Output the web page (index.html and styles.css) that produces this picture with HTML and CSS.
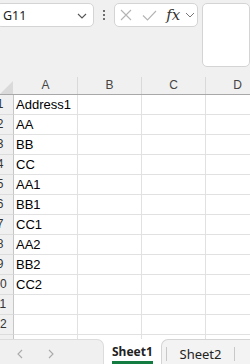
FILE: index.html
```html
<!DOCTYPE html>
<html lang="en">
<head>
    <meta charset="UTF-8">
    <meta name="viewport" content="width=device-width, initial-scale=1.0">
    <title>Book1 - Sheet1</title>
    <link rel="stylesheet" href="styles.css">
</head>
<body>
    <div class="ribbon">
        <div class="namebox">
            <span>G11</span>
            <svg class="chev" width="10" height="6" viewBox="0 0 10 6"><path d="M1 1l4 4 4-4" fill="none" stroke="#555" stroke-width="1.1"/></svg>
        </div>
        <div class="kebab"><i></i><i></i><i></i></div>
        <div class="fx-box">
            <svg class="btn-x" width="12" height="12" viewBox="0 0 12 12"><path d="M1 1l10 10M11 1L1 11" stroke="#b4b4b4" stroke-width="1.1"/></svg>
            <svg class="btn-ok" width="15" height="11" viewBox="0 0 15 11"><path d="M1 5.5l4.5 4.5L14 1" fill="none" stroke="#b4b4b4" stroke-width="1.1"/></svg>
            <span class="fx">fx</span>
            <svg class="chev" width="10" height="6" viewBox="0 0 10 6"><path d="M1 1l4 4 4-4" fill="none" stroke="#777" stroke-width="1"/></svg>
        </div>
        <div class="formula-input"></div>
    </div>

    <div class="sheet">
        <div class="col-heads">
            <div class="corner">
                <svg width="13" height="14" viewBox="0 0 13 14"><polygon points="0,14 13,14 13,1" fill="#dadada"/></svg>
            </div>
            <div class="col-head">A</div>
            <div class="col-head">B</div>
            <div class="col-head">C</div>
            <div class="col-head">D</div>
        </div>
        <div class="rows" id="rows"></div>
    </div>

    <div class="tabbar">
        <div class="tab-nav">
            <svg width="8" height="10" viewBox="0 0 8 10"><path d="M6 1L2 5l4 4" fill="none" stroke="#aaa" stroke-width="1.1"/></svg>
            <svg width="8" height="10" viewBox="0 0 8 10"><path d="M2 1l4 4-4 4" fill="none" stroke="#aaa" stroke-width="1.1"/></svg>
        </div>
        <div class="tab active"><span>Sheet1</span></div>
        <div class="tab-rest">
            <div class="tab"><span>Sheet2</span></div>
        </div>
    </div>

    <script>
        const values = ['Address1', 'AA', 'BB', 'CC', 'AA1', 'BB1', 'CC1', 'AA2', 'BB2', 'CC2', '', '', ''];
        const rows = document.getElementById('rows');

        values.forEach((value, i) => {
            const row = document.createElement('div');
            row.className = 'row';
            row.innerHTML = `<div class="row-head"><span>${i + 1}</span></div>` +
                `<div class="cell">${value}</div><div class="cell"></div><div class="cell"></div><div class="cell"></div>`;
            rows.appendChild(row);
        });
    </script>
</body>
</html>
```

FILE: styles.css
```css
* {
    margin: 0;
    padding: 0;
    box-sizing: border-box;
}

body {
    width: 250px;
    height: 364px;
    overflow: hidden;
    background: #ffffff;
    font-family: "Liberation Sans", Arial, sans-serif;
    color: #000;
}

.ribbon {
    height: 74px;
    background: #f0f0f0;
    display: flex;
    align-items: flex-start;
    padding-top: 3px;
}

.namebox {
    width: 101px;
    height: 24px;
    margin-left: -4px;
    background: #fff;
    border: 1px solid #d4d4d4;
    border-radius: 5px;
    display: flex;
    align-items: center;
    justify-content: space-between;
    padding: 0 6px 0 6px;
    font-family: "Noto Sans", sans-serif;
    font-size: 12.5px;
    color: #222;
}

.namebox .chev {
    margin-top: 1px;
}

.kebab {
    width: 21px;
    height: 24px;
    display: flex;
    flex-direction: column;
    align-items: center;
    justify-content: center;
    gap: 2px;
}

.kebab i {
    width: 2px;
    height: 2px;
    background: #444;
    border-radius: 1px;
}

.fx-box {
    width: 86px;
    height: 24px;
    background: #fff;
    border: 1px solid #d4d4d4;
    border-radius: 5px;
    display: flex;
    align-items: center;
    padding-left: 5px;
}

.btn-x {
    margin-right: 10px;
}

.btn-ok {
    margin-right: 9px;
}

.fx {
    font-family: "DejaVu Serif", "Liberation Serif", serif;
    font-style: italic;
    font-size: 15px;
    color: #333;
    margin-right: 5px;
    margin-top: -1px;
}

.formula-input {
    width: 50px;
    height: 64px;
    margin-left: 4px;
    background: #fff;
    border: 1px solid #d4d4d4;
    border-radius: 5px;
}

.sheet {
    height: 265px;
    overflow: hidden;
}

.col-heads,
.row {
    display: grid;
    grid-template-columns: 14px 64px 64px 64px 64px;
    width: 270px;
}

.col-heads {
    height: 21px;
    background: #f0f0f0;
    border-bottom: 1px solid #a8a8a8;
    padding-top: 3px;
}

.corner {
    display: flex;
    align-items: flex-end;
}

.corner svg {
    display: block;
}

.col-head {
    border-right: 1px solid #d9d9d9;
    text-align: center;
    font-size: 12px;
    line-height: 17px;
    color: #444;
}

.row {
    height: 20px;
}

.row-head {
    background: #f0f0f0;
    border-right: 1px solid #c6c6c6;
    border-bottom: 1px solid #dcdcdc;
    overflow: hidden;
}

.row-head span {
    display: block;
    width: 26px;
    margin-left: -13px;
    text-align: center;
    font-size: 12px;
    line-height: 19px;
    color: #333;
}

.cell {
    border-right: 1px solid #e1e1e1;
    border-bottom: 1px solid #e1e1e1;
    padding: 1px 0 0 2px;
    font-size: 13px;
    line-height: 18px;
    white-space: nowrap;
}

.tabbar {
    height: 25px;
    display: flex;
    background: #fff;
}

.tab-nav {
    width: 104px;
    background: #f0f0f0;
    border-top: 1px solid #dcdcdc;
    border-right: 1px solid #dcdcdc;
    border-top-right-radius: 7px;
    display: flex;
    align-items: center;
    gap: 23px;
    padding-left: 16px;
    padding-top: 3px;
}

.tab {
    font-family: "Noto Sans", sans-serif;
    font-size: 13px;
    color: #222;
}

.tab.active {
    width: 57px;
    padding-left: 8px;
    padding-top: 3px;
    font-weight: bold;
    font-size: 12px;
}

.tab.active span {
    display: inline-block;
    line-height: 19px;
    border-bottom: 3px solid #137c41;
}

.tab-rest {
    flex: 1;
    background: #f3f3f3;
    border-top: 1px solid #d4d4d4;
    border-left: 1px solid #d4d4d4;
    border-top-left-radius: 7px;
    padding: 7px 0 3px 4px;
}

.tab-rest .tab {
    width: 69px;
    border-left: 1px solid #c8c8c8;
    border-right: 1px solid #c8c8c8;
    height: 14px;
    line-height: 14px;
    text-align: center;
}
```
